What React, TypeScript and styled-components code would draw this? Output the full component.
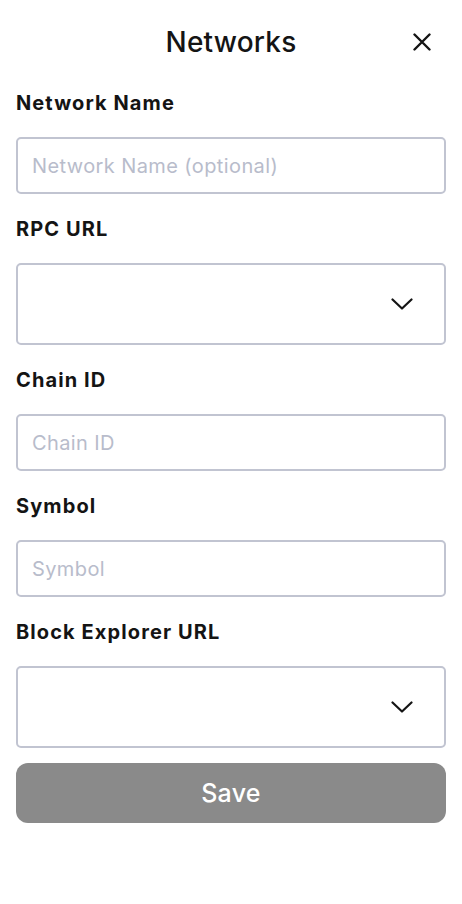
import { createGlobalStyle, styled } from 'styled-components'

const GlobalStyle = createGlobalStyle`
  html, body {
    margin: 0;
    padding: 0;
    background: #ffffff;
    font-family: Inter, "Liberation Sans", sans-serif;
    color: #141414;
  }
`

const Page = styled.div`
  display: flex;
  flex-direction: column;
  padding: 0 16px;
  width: 462px;
  box-sizing: border-box;
`

const Header = styled.header`
  position: relative;
  height: 84px;
  margin-bottom: 7px;
  display: flex;
  align-items: center;
  justify-content: center;
`

const Title = styled.h1`
  margin: 0;
  font-size: 28px;
  font-weight: 500;
  letter-spacing: 0.2px;
`

const CloseButton = styled.button`
  all: unset;
  cursor: pointer;
  position: absolute;
  right: 15px;
  top: 33px;
  width: 18px;
  height: 18px;
  display: flex;
`

const Form = styled.form`
  display: flex;
  flex-direction: column;
  gap: 23px;
`

const Field = styled.div`
  display: flex;
  flex-direction: column;
  gap: 22px;
`

const Label = styled.label`
  font-size: 20px;
  line-height: 24px;
  font-weight: 700;
  letter-spacing: 1.1px;
  height: 24px;
`

const Input = styled.input`
  box-sizing: border-box;
  height: 57px;
  width: 100%;
  border: 2px solid #c1c4d1;
  border-radius: 5px;
  padding: 0 14px;
  font-family: inherit;
  font-size: 20px;
  letter-spacing: 0.4px;
  color: #141414;
  outline: none;
  &::placeholder {
    color: #b8bccb;
  }
`

const SelectBox = styled.div`
  box-sizing: border-box;
  height: 82px;
  border: 2px solid #c1c4d1;
  border-radius: 5px;
  display: flex;
  align-items: center;
  justify-content: flex-end;
  padding-right: 31px;
`

const SaveButton = styled.button`
  all: unset;
  box-sizing: border-box;
  margin-top: 15px;
  height: 60px;
  border-radius: 12px;
  background: #8a8a8a;
  color: #ffffff;
  font-size: 25px;
  font-weight: 500;
  letter-spacing: 0.3px;
  display: flex;
  align-items: center;
  justify-content: center;
`

function Chevron() {
  return (
    <svg width="22" height="12" viewBox="0 0 22 12" fill="none">
      <path d="M1.5 1.5 L11 10.5 L20.5 1.5" stroke="#141414" strokeWidth="2.2" strokeLinecap="round" strokeLinejoin="round" />
    </svg>
  )
}

function CloseIcon() {
  return (
    <svg width="18" height="18" viewBox="0 0 18 18" fill="none">
      <path d="M1.5 1.5 L16.5 16.5 M16.5 1.5 L1.5 16.5" stroke="#141414" strokeWidth="2.4" strokeLinecap="round" />
    </svg>
  )
}

export default function App() {
  return (
    <Page>
      <GlobalStyle />
      <Header>
        <Title>Networks</Title>
        <CloseButton aria-label="Close">
          <CloseIcon />
        </CloseButton>
      </Header>
      <Form onSubmit={(e) => e.preventDefault()}>
        <Field>
          <Label>Network Name</Label>
          <Input placeholder="Network Name (optional)" />
        </Field>
        <Field>
          <Label>RPC URL</Label>
          <SelectBox>
            <Chevron />
          </SelectBox>
        </Field>
        <Field>
          <Label>Chain ID</Label>
          <Input placeholder="Chain ID" />
        </Field>
        <Field>
          <Label>Symbol</Label>
          <Input placeholder="Symbol" />
        </Field>
        <Field>
          <Label>Block Explorer URL</Label>
          <SelectBox>
            <Chevron />
          </SelectBox>
        </Field>
      </Form>
      <SaveButton type="button">Save</SaveButton>
    </Page>
  )
}
